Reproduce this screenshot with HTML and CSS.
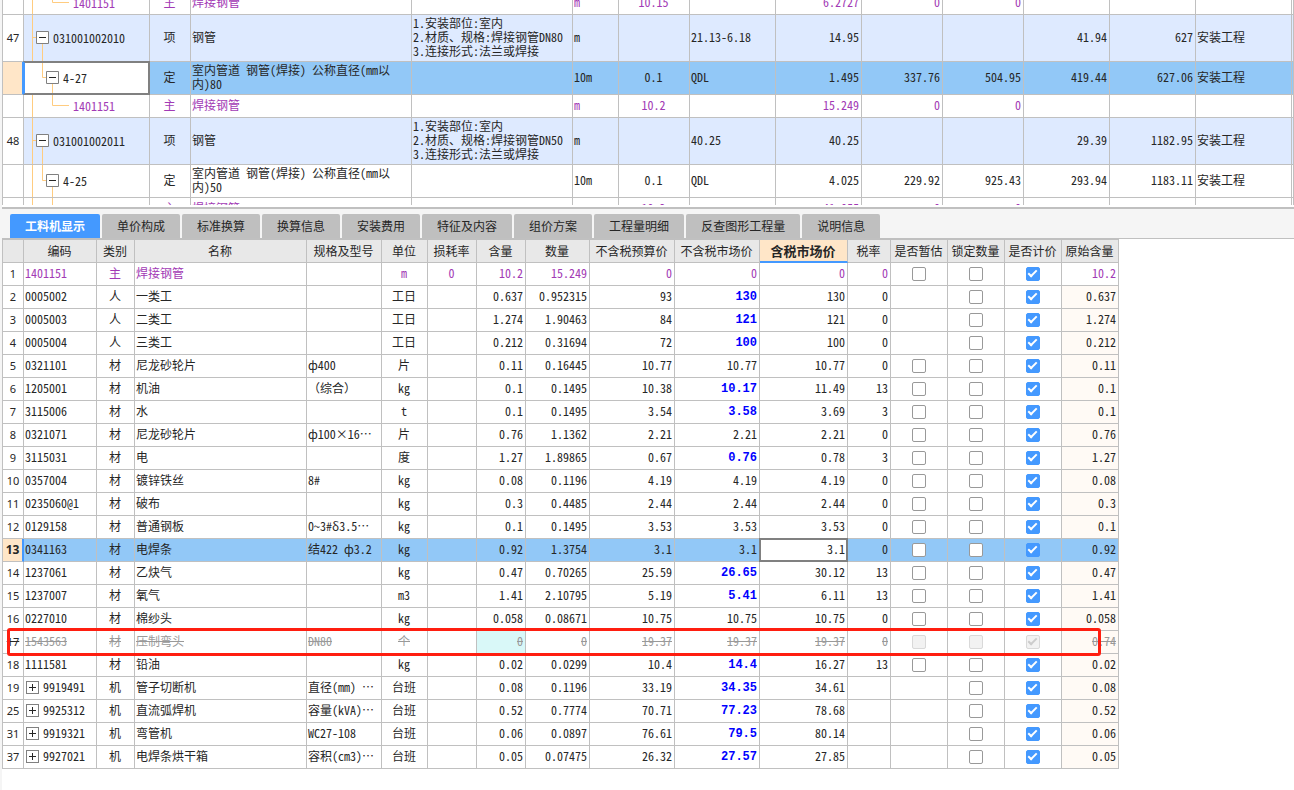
FILE: index.html
```html
<!DOCTYPE html>
<html lang="zh-CN">
<head>
<meta charset="utf-8">
<title>工料机显示</title>
<link rel="stylesheet" href="styles.css">
</head>
<body>
<main class="app">
<section class="bill" aria-label="清单">
<table class="grid bill-grid">
<colgroup><col class="w21"><col class="w126"><col class="w41"><col class="w221"><col class="w161"><col class="w46"><col class="w71"><col class="w86"><col class="w86"><col class="w81"><col class="w81"><col class="w86"><col class="w86"><col class="w96"><col></colgroup>
<tbody>
<tr class="leaf main"><td><td><div class="tree"><svg width="48" height="22"><path class="line" d="M8.5 0V22M28.5 0V10.5H45"/></svg>1401151</div><td>主<td>焊接钢管<td><td>m<td>10.15<td><td>6.2727<td>0<td>0<td><td><td><td>
<tr class="item"><td>47<td><div class="tree"><svg width="28" height="46"><path class="line" d="M8.5 0V46M8.5 22.5H12M18.5 28V46"/><path class="box" d="M12.5 16.5h12v12h-12z"/><path class="sign" d="M15 22.5h7"/></svg>031001002010</div><td>项<td>钢管<td>1.安装部位:室内<br>2.材质、规格:焊接钢管DN80<br>3.连接形式:法兰或焊接<td>m<td><td>21.13-6.18<td>14.95<td><td><td>41.94<td>627<td>安装工程<td>
<tr class="quota selected"><td class="gutter"><td class="current"><div class="tree"><svg width="38" height="32"><path class="line" d="M18.5 0V15.5H22M28.5 22V32"/><path class="box" d="M22.5 9.5h12v12h-12z"/><path class="sign" d="M25 15.5h7"/></svg>4-27</div><td>定<td>室内管道 钢管(焊接) 公称直径(mm以内)80<td><td>10m<td>0.1<td>QDL<td>1.495<td>337.76<td>504.95<td>419.44<td>627.06<td>安装工程<td>
<tr class="leaf main"><td><td><div class="tree"><svg width="48" height="22"><path class="line" d="M8.5 0V22M28.5 0V10.5H45"/></svg>1401151</div><td>主<td>焊接钢管<td><td>m<td>10.2<td><td>15.249<td>0<td>0<td><td><td><td>
<tr class="item"><td>48<td><div class="tree"><svg width="28" height="46"><path class="line" d="M8.5 0V46M8.5 22.5H12M18.5 28V46"/><path class="box" d="M12.5 16.5h12v12h-12z"/><path class="sign" d="M15 22.5h7"/></svg>031001002011</div><td>项<td>钢管<td>1.安装部位:室内<br>2.材质、规格:焊接钢管DN50<br>3.连接形式:法兰或焊接<td>m<td><td>40.25<td>40.25<td><td><td>29.39<td>1182.95<td>安装工程<td>
<tr class="quota"><td><td><div class="tree"><svg width="38" height="32"><path class="line" d="M8.5 0V32M18.5 0V15.5H22M28.5 22V32"/><path class="box" d="M22.5 9.5h12v12h-12z"/><path class="sign" d="M25 15.5h7"/></svg>4-25</div><td>定<td>室内管道 钢管(焊接) 公称直径(mm以内)50<td><td>10m<td>0.1<td>QDL<td>4.025<td>229.92<td>925.43<td>293.94<td>1183.11<td>安装工程<td>
<tr class="leaf main"><td><td><div class="tree"><svg width="48" height="22"><path class="line" d="M8.5 0V22M28.5 0V10.5H45"/></svg>1401151</div><td>主<td>焊接钢管<td><td>m<td>10.2<td><td>41.055<td>0<td>0<td><td><td><td>
</tbody>
</table>
</section>

<nav class="tabs" role="tablist">
<button class="tab active" role="tab" aria-selected="true">工料机显示</button>
<button class="tab" role="tab">单价构成</button>
<button class="tab" role="tab">标准换算</button>
<button class="tab" role="tab">换算信息</button>
<button class="tab" role="tab">安装费用</button>
<button class="tab" role="tab">特征及内容</button>
<button class="tab" role="tab">组价方案</button>
<button class="tab" role="tab">工程量明细</button>
<button class="tab" role="tab">反查图形工程量</button>
<button class="tab" role="tab">说明信息</button>
</nav>

<section class="detail" aria-label="工料机">
<table class="grid res-grid">
<colgroup><col class="w21"><col class="w73"><col class="w38"><col class="w172"><col class="w75"><col class="w46"><col class="w49"><col class="w49"><col class="w64"><col class="w85"><col class="w85"><col class="w88"><col class="w43"><col class="w57"><col class="w57"><col class="w57"><col class="w57"></colgroup>
<thead>
<tr><th><th>编码<th>类别<th>名称<th>规格及型号<th>单位<th>损耗率<th>含量<th>数量<th>不含税预算价<th>不含税市场价<th class="sorted">含税市场价<th>税率<th>是否暂估<th>锁定数量<th>是否计价<th>原始含量
</thead>
<tbody>
<tr class="main"><td>1<td>1401151<td>主<td>焊接钢管<td><td>m<td>0<td>10.2<td>15.249<td>0<td>0<td>0<td>0<td><input type="checkbox" aria-label="是否暂估"><td><input type="checkbox" aria-label="锁定数量"><td><input type="checkbox" aria-label="是否计价" checked><td>10.2
<tr><td>2<td>0005002<td>人<td>一类工<td><td>工日<td><td>0.637<td>0.952315<td>93<td class="adj">130<td>130<td>0<td><td><input type="checkbox" aria-label="锁定数量"><td><input type="checkbox" aria-label="是否计价" checked><td>0.637
<tr><td>3<td>0005003<td>人<td>二类工<td><td>工日<td><td>1.274<td>1.90463<td>84<td class="adj">121<td>121<td>0<td><td><input type="checkbox" aria-label="锁定数量"><td><input type="checkbox" aria-label="是否计价" checked><td>1.274
<tr><td>4<td>0005004<td>人<td>三类工<td><td>工日<td><td>0.212<td>0.31694<td>72<td class="adj">100<td>100<td>0<td><td><input type="checkbox" aria-label="锁定数量"><td><input type="checkbox" aria-label="是否计价" checked><td>0.212
<tr><td>5<td>0321101<td>材<td>尼龙砂轮片<td>ф400<td>片<td><td>0.11<td>0.16445<td>10.77<td>10.77<td>10.77<td>0<td><input type="checkbox" aria-label="是否暂估"><td><input type="checkbox" aria-label="锁定数量"><td><input type="checkbox" aria-label="是否计价" checked><td>0.11
<tr><td>6<td>1205001<td>材<td>机油<td>（综合）<td>kg<td><td>0.1<td>0.1495<td>10.38<td class="adj">10.17<td>11.49<td>13<td><input type="checkbox" aria-label="是否暂估"><td><input type="checkbox" aria-label="锁定数量"><td><input type="checkbox" aria-label="是否计价" checked><td>0.1
<tr><td>7<td>3115006<td>材<td>水<td><td>t<td><td>0.1<td>0.1495<td>3.54<td class="adj">3.58<td>3.69<td>3<td><input type="checkbox" aria-label="是否暂估"><td><input type="checkbox" aria-label="锁定数量"><td><input type="checkbox" aria-label="是否计价" checked><td>0.1
<tr><td>8<td>0321071<td>材<td>尼龙砂轮片<td>ф100×16…<td>片<td><td>0.76<td>1.1362<td>2.21<td>2.21<td>2.21<td>0<td><input type="checkbox" aria-label="是否暂估"><td><input type="checkbox" aria-label="锁定数量"><td><input type="checkbox" aria-label="是否计价" checked><td>0.76
<tr><td>9<td>3115031<td>材<td>电<td><td>度<td><td>1.27<td>1.89865<td>0.67<td class="adj">0.76<td>0.78<td>3<td><input type="checkbox" aria-label="是否暂估"><td><input type="checkbox" aria-label="锁定数量"><td><input type="checkbox" aria-label="是否计价" checked><td>1.27
<tr><td>10<td>0357004<td>材<td>镀锌铁丝<td>8#<td>kg<td><td>0.08<td>0.1196<td>4.19<td>4.19<td>4.19<td>0<td><input type="checkbox" aria-label="是否暂估"><td><input type="checkbox" aria-label="锁定数量"><td><input type="checkbox" aria-label="是否计价" checked><td>0.08
<tr><td>11<td>0235060@1<td>材<td>破布<td><td>kg<td><td>0.3<td>0.4485<td>2.44<td>2.44<td>2.44<td>0<td><input type="checkbox" aria-label="是否暂估"><td><input type="checkbox" aria-label="锁定数量"><td><input type="checkbox" aria-label="是否计价" checked><td>0.3
<tr><td>12<td>0129158<td>材<td>普通钢板<td>0~3#δ3.5…<td>kg<td><td>0.1<td>0.1495<td>3.53<td>3.53<td>3.53<td>0<td><input type="checkbox" aria-label="是否暂估"><td><input type="checkbox" aria-label="锁定数量"><td><input type="checkbox" aria-label="是否计价" checked><td>0.1
<tr class="selected"><td class="gutter">13<td>0341163<td>材<td>电焊条<td>结422 ф3.2<td>kg<td><td>0.92<td>1.3754<td>3.1<td>3.1<td class="current">3.1<td>0<td><input type="checkbox" aria-label="是否暂估"><td><input type="checkbox" aria-label="锁定数量"><td><input type="checkbox" aria-label="是否计价" checked><td>0.92
<tr><td>14<td>1237061<td>材<td>乙炔气<td><td>kg<td><td>0.47<td>0.70265<td>25.59<td class="adj">26.65<td>30.12<td>13<td><input type="checkbox" aria-label="是否暂估"><td><input type="checkbox" aria-label="锁定数量"><td><input type="checkbox" aria-label="是否计价" checked><td>0.47
<tr><td>15<td>1237007<td>材<td>氧气<td><td>m3<td><td>1.41<td>2.10795<td>5.19<td class="adj">5.41<td>6.11<td>13<td><input type="checkbox" aria-label="是否暂估"><td><input type="checkbox" aria-label="锁定数量"><td><input type="checkbox" aria-label="是否计价" checked><td>1.41
<tr><td>16<td>0227010<td>材<td>棉纱头<td><td>kg<td><td>0.058<td>0.08671<td>10.75<td>10.75<td>10.75<td>0<td><input type="checkbox" aria-label="是否暂估"><td><input type="checkbox" aria-label="锁定数量"><td><input type="checkbox" aria-label="是否计价" checked><td>0.058
<tr class="removed"><td>17<span class="callout"></span><td>1543563<td>材<td>压制弯头<td>DN80<td>个<td><td class="zeroed">0<td>0<td>19.37<td>19.37<td>19.37<td>0<td><input type="checkbox" aria-label="是否暂估" disabled><td><input type="checkbox" aria-label="锁定数量" disabled><td><input type="checkbox" aria-label="是否计价" checked disabled><td>0.74
<tr><td>18<td>1111581<td>材<td>铅油<td><td>kg<td><td>0.02<td>0.0299<td>10.4<td class="adj">14.4<td>16.27<td>13<td><input type="checkbox" aria-label="是否暂估"><td><input type="checkbox" aria-label="锁定数量"><td><input type="checkbox" aria-label="是否计价" checked><td>0.02
<tr><td>19<td><div class="tree"><button class="expand" aria-label="展开"></button>9919491</div><td>机<td>管子切断机<td>直径(mm) …<td>台班<td><td>0.08<td>0.1196<td>33.19<td class="adj">34.35<td>34.61<td><td><td><input type="checkbox" aria-label="锁定数量"><td><input type="checkbox" aria-label="是否计价" checked><td>0.08
<tr><td>25<td><div class="tree"><button class="expand" aria-label="展开"></button>9925312</div><td>机<td>直流弧焊机<td>容量(kVA)…<td>台班<td><td>0.52<td>0.7774<td>70.71<td class="adj">77.23<td>78.68<td><td><td><input type="checkbox" aria-label="锁定数量"><td><input type="checkbox" aria-label="是否计价" checked><td>0.52
<tr><td>31<td><div class="tree"><button class="expand" aria-label="展开"></button>9919321</div><td>机<td>弯管机<td>WC27-108<td>台班<td><td>0.06<td>0.0897<td>76.61<td class="adj">79.5<td>80.14<td><td><td><input type="checkbox" aria-label="锁定数量"><td><input type="checkbox" aria-label="是否计价" checked><td>0.06
<tr><td>37<td><div class="tree"><button class="expand" aria-label="展开"></button>9927021</div><td>机<td>电焊条烘干箱<td>容积(cm3)…<td>台班<td><td>0.05<td>0.07475<td>26.32<td class="adj">27.57<td>27.85<td><td><td><input type="checkbox" aria-label="锁定数量"><td><input type="checkbox" aria-label="是否计价" checked><td>0.05
</tbody>
</table>
</section>
</main>
</body>
</html>
```
FILE: styles.css
```css
:root {
  --line: #c0c0c0;
  --ink: #262626;
  --accent: #4499ff;
  --panel: #f5f5f5;
  --peach: #ffe6c8;
  --pick: #92c8f7;
}

*,
*::before,
*::after { box-sizing: border-box; }

body {
  margin: 0;
  background: #fff;
  color: var(--ink);
  font: 12px/14px "Noto Sans Mono CJK SC", "Noto Sans CJK SC", monospace;
}

.app {
  display: flex;
  flex-direction: column;
  min-height: 100vh;
  overflow: hidden;
  border-left: 2px solid var(--panel);
}

/* Shared grid */
.grid {
  table-layout: fixed;
  border-collapse: separate;
  border-spacing: 0;
  border-left: 1px solid var(--line);
}

.grid td,
.grid th {
  height: 23px;
  padding: 0 2px 2px 1px;
  border-right: 1px solid var(--line);
  border-bottom: 1px solid var(--line);
  white-space: nowrap;
  overflow: hidden;
  text-align: left;
  vertical-align: middle;
}

.grid td:first-child {
  padding: 0;
  text-align: center;
  font-family: "Noto Sans", sans-serif;
  font-size: 11px;
}

.w21 { width: 21px; }
.w38 { width: 38px; }
.w41 { width: 41px; }
.w43 { width: 43px; }
.w46 { width: 46px; }
.w49 { width: 49px; }
.w57 { width: 57px; }
.w64 { width: 64px; }
.w71 { width: 71px; }
.w73 { width: 73px; }
.w75 { width: 75px; }
.w81 { width: 81px; }
.w85 { width: 85px; }
.w86 { width: 86px; }
.w88 { width: 88px; }
.w96 { width: 96px; }
.w126 { width: 126px; }
.w161 { width: 161px; }
.w172 { width: 172px; }
.w221 { width: 221px; }

.main td { color: #a23ab5; }
.main td:first-child { color: var(--ink); }
.selected td { background: var(--pick); }

.grid td.gutter {
  background: var(--peach);
  border-right: 2px solid var(--accent);
  font-weight: bold;
  font-size: 12px;
}

.grid td.current {
  position: relative;
  overflow: visible;
  background: #fff;
}

.current::after {
  content: "";
  position: absolute;
  inset: -1px;
  border: 2px solid #808080;
}

.gutter + .current::after {
  border-left-color: var(--accent);
}

.tree {
  display: flex;
  align-items: center;
  gap: 1px;
}

.tree svg {
  display: block;
  flex: none;
}

.line { fill: none; stroke: #ffcc80; }
.box { fill: #fff; stroke: #808080; }
.sign { stroke: var(--ink); }

/* Bill list, scrolled part-way into its first row */
.bill {
  height: 205px;
  overflow: hidden;
}

.bill-grid {
  width: 100%;
  margin-top: -8px;
}

.bill-grid .item td { height: 47px; }
.bill-grid .item td:not(:first-child) { background: #deeaff; }
.bill-grid .quota td { height: 33px; }
.bill-grid td:nth-child(2) { padding: 0; }
.bill-grid td:nth-child(4) { white-space: normal; }
.bill-grid td:nth-child(4) { padding-right: 16px; }
.bill-grid td:nth-child(3),
.bill-grid td:nth-child(7) { text-align: center; }
.bill-grid td:nth-child(n+9):nth-child(-n+13) { text-align: right; }

/* Tabs */
.tabs {
  display: flex;
  gap: 2px;
  margin-top: 2px;
  padding: 5px 8px 0;
  background: var(--panel);
  border-top: 2px solid var(--line);
  border-bottom: 1px solid var(--line);
}

.tab {
  height: 24px;
  padding: 0 15px;
  border: 0;
  border-radius: 2px 2px 0 0;
  background: #bfbfbf;
  color: var(--ink);
  font: 12px/24px "Noto Sans CJK SC", sans-serif;
  white-space: nowrap;
}

.tab.active {
  background: var(--accent);
  color: #fff;
  font-weight: bold;
}

/* Resource list */
.res-grid {
  width: 1117px;
  border-top: 1px solid var(--line);
}

.res-grid th {
  padding: 0 1px 0 0;
  background: #e8e8e8;
  font-weight: normal;
  text-align: center;
}

.res-grid th.sorted {
  background: var(--peach);
  border-bottom: 2px solid var(--accent);
  font-size: 13px;
  font-weight: bold;
}

.res-grid td:nth-child(3),
.res-grid td:nth-child(6),
.res-grid td:nth-child(7),
.res-grid td:nth-child(14),
.res-grid td:nth-child(15),
.res-grid td:nth-child(16) { text-align: center; }

.res-grid td:nth-child(n+14):nth-child(-n+16) { padding: 0; }

.res-grid td:nth-child(n+8):nth-child(-n+13),
.res-grid td:nth-child(17) { text-align: right; }

.res-grid tr:not(.selected):not(.main) td:nth-child(17) { background: #fffaf5; }

.res-grid td.adj {
  padding-bottom: 0;
  color: #00f;
  font-family: "Liberation Mono", monospace;
  font-weight: bold;
}

.removed { position: relative; }
.removed td { color: #999; text-decoration: line-through; }
.removed td:first-child { color: var(--ink); }
.removed .zeroed { background: #d9f8f8; }

.callout {
  position: absolute;
  inset: -3px 18px -2px 4px;
  border: 3px solid #ff1e10;
  border-radius: 3px;
}

.expand {
  flex: none;
  width: 13px;
  height: 13px;
  margin: 0 3px 0 1px;
  padding: 0;
  border: 1px solid #808080;
  background:
    linear-gradient(var(--ink), var(--ink)) center / 7px 1px no-repeat,
    linear-gradient(var(--ink), var(--ink)) center / 1px 7px no-repeat,
    #fff;
}

input[type="checkbox"] {
  appearance: none;
  display: block;
  position: relative;
  width: 14px;
  height: 14px;
  margin: 0 auto;
  border: 1px solid #999;
  border-radius: 2px;
  background: #fff;
}

input[type="checkbox"]:checked {
  border-color: var(--accent);
  background: var(--accent);
}

input[type="checkbox"]:checked::after {
  content: "";
  position: absolute;
  left: 3px;
  top: 0;
  width: 5px;
  height: 9px;
  border: solid #fff;
  border-width: 0 2px 2px 0;
  transform: rotate(45deg);
}

input[type="checkbox"]:disabled {
  border-color: #d9d9d9;
  background: #f2f2f2;
}

input[type="checkbox"]:disabled::after { border-color: #ccc; }
```
